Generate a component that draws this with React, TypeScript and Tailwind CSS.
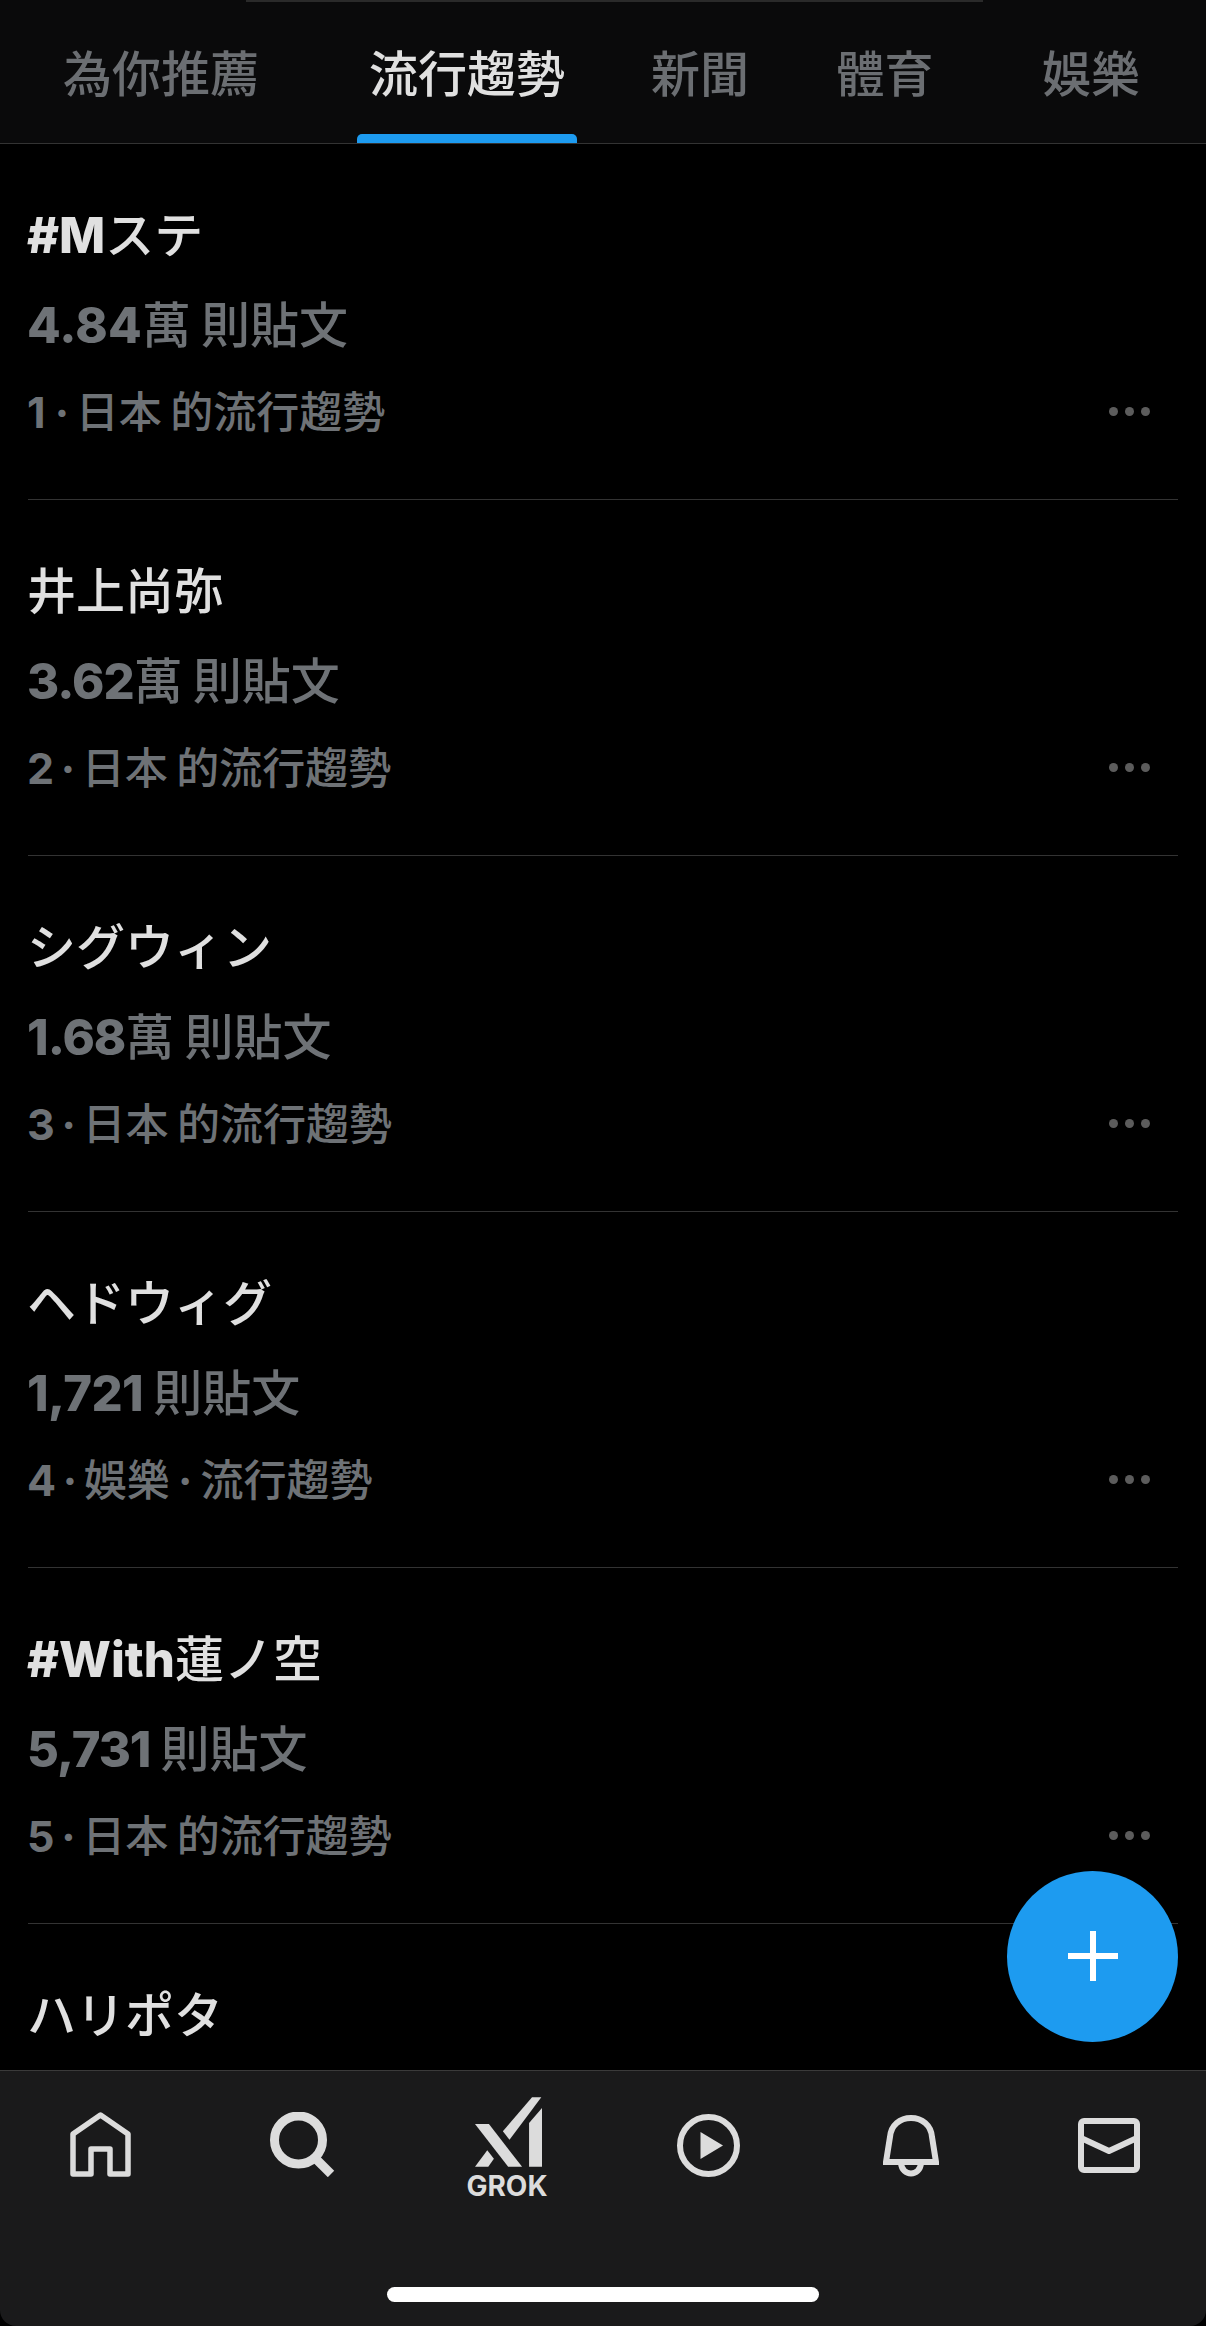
const CJK = "font-['Inter','Noto_Sans_CJK_JP','Noto_Sans_CJK_TC',sans-serif]";

const tabs = [
  { label: "為你推薦", w: "w-[322px]", active: false },
  { label: "流行趨勢", w: "w-[290px]", active: true },
  { label: "新聞", w: "w-[176px]", active: false },
  { label: "體育", w: "w-[193px]", active: false },
  { label: "娛樂", w: "w-[220px]", active: false },
];

const rows = [
  { title: <><b className="font-extrabold">#M</b>ステ</>, num: "4.84", numCls: "tracking-[0.2px]", unit: "萬", rank: "1", meta: "日本 的流行趨勢" },
  { title: <>井上尚弥</>, num: "3.62", numCls: "tracking-[-1px]", unit: "萬", rank: "2", meta: "日本 的流行趨勢" },
  { title: <>シグウィン</>, num: "1.68", numCls: "tracking-[-1px]", unit: "萬", rank: "3", meta: "日本 的流行趨勢" },
  { title: <>ヘドウィグ</>, num: "1,721", numCls: "tracking-[-0.6px]", unit: "", rank: "4", meta: <>娛樂<b className="mx-[1px] font-bold"> · </b>流行趨勢</> },
  { title: <><b className="font-extrabold">#With</b>蓮ノ空</>, num: "5,731", numCls: "tracking-[-1px]", unit: "", rank: "5", meta: "日本 的流行趨勢" },
  { title: <>ハリポタ</>, num: "", numCls: "", unit: "", rank: "", meta: "" },
];

function Row({ r }: { r: (typeof rows)[number] }) {
  return (
    <div className="mx-[28px] h-[356px] shrink-0 border-b border-[#333333] pt-[62px]">
      <div className="-ml-px h-[60px] text-[49px] font-medium leading-[60px] text-[#e0e0e0]">{r.title}</div>
      {r.rank && (
        <>
          <div className="-ml-px mt-[30px] h-[60px] whitespace-pre text-[49px] font-medium leading-[60px] text-[#6e7276] [word-spacing:-3px]">
            <b className={`font-extrabold ${r.numCls}`}>{r.num}</b>
            {r.unit} 則貼文
          </div>
          <div className="mt-[26px] flex h-[60px] items-center justify-between whitespace-pre text-[43px] font-medium leading-[60px] text-[#6e7276]">
            <span className="-ml-px [word-spacing:-3px]">
              <b className="inline-block min-w-[21px] font-bold">{r.rank}</b>
              <b className="mx-[-0.5px] font-bold"> · </b>
              {r.meta}
            </span>
            <span className="mb-[2px] mr-[28px] flex gap-[7px]">
              <span className="h-[9px] w-[9px] rounded-full bg-[#5c5c5c]" />
              <span className="h-[9px] w-[9px] rounded-full bg-[#5c5c5c]" />
              <span className="h-[9px] w-[9px] rounded-full bg-[#5c5c5c]" />
            </span>
          </div>
        </>
      )}
    </div>
  );
}

const IC = "#dcdcdc";

export default function App() {
  return (
    <div className={`relative flex h-[2326px] w-[1206px] flex-col overflow-hidden bg-black ${CJK}`}>
      <header className="h-[144px] shrink-0 border-b border-[#333333] bg-[#0a0a0b]">
        <div className="ml-[246px] h-[2px] w-[737px] bg-[#2a2a2a]" />
        <div className="flex h-[141px]">
          {tabs.map((t) => (
            <div key={t.label} className={`flex h-full flex-col items-center ${t.w}`}>
              <div
                className={`mt-[43px] h-[60px] text-[49px] font-medium leading-[60px] ${
                  t.active ? "text-[#e0e0e0]" : "text-[#6b6e72]"
                }`}
              >
                {t.label}
              </div>
              {t.active && <div className="mt-auto h-[9px] w-[220px] rounded-t-[5px] bg-[#1d9bf0]" />}
            </div>
          ))}
        </div>
      </header>

      <main className="flex min-h-0 flex-1 flex-col overflow-hidden">
        {rows.map((r, i) => (
          <Row key={i} r={r} />
        ))}
      </main>

      <button className="absolute left-[1007px] top-[1871px] flex h-[171px] w-[171px] items-center justify-center rounded-full bg-[#1d9bf0]">
        <svg className="mb-[1px]" width="50" height="50" viewBox="0 0 50 50">
          <path d="M25 0V50M0 25H50" stroke="#ffffff" strokeWidth="6" fill="none" />
        </svg>
      </button>

      <nav className="flex h-[256px] shrink-0 flex-col rounded-b-[16px] border-t border-[#3a3a3a] bg-[#1a1a1b]">
        <div className="flex items-start pl-[70px]">
          <svg className="mt-[41px]" width="61" height="65" viewBox="0 0 61 65" fill="none" stroke={IC} strokeWidth="5.5" strokeLinejoin="round">
            <path d="M3 62V22L30.5 3L58 22V62H40V37H21V62Z" />
          </svg>
          <svg className="ml-[139px] mt-[41px]" width="65" height="65" viewBox="0 0 65 65" fill="none" stroke={IC} strokeWidth="9">
            <circle cx="28.5" cy="28" r="24" />
            <path d="M45 46L61 62" />
          </svg>
          <div className="ml-[132px] mt-[26px] flex w-[80px] flex-col items-center">
            <svg className="ml-[2px]" width="67" height="70" viewBox="128 52 202 210" fill={IC}>
              <path d="M300 52H328L232 180L212 155Z" />
              <path d="M128 133H170L270 262H228Z" />
              <path d="M128 262L165 212L185 238L168 262Z" />
              <path d="M291 262V130L330 85V262Z" />
            </svg>
            <div className="mt-[6px] text-[28px] font-bold leading-[26px] text-[#dcdcdc]">GROK</div>
          </div>
          <svg className="ml-[130px] mt-[43px]" width="63" height="63" viewBox="0 0 63 63" fill="none" stroke={IC} strokeWidth="6">
            <circle cx="31.5" cy="31.5" r="28.5" />
            <path d="M23.5 18L46 31.5L23.5 45Z" fill={IC} stroke="none" />
          </svg>
          <svg className="ml-[143px] mt-[44px]" width="56" height="62" viewBox="0 0 56 62" fill="none" stroke={IC} strokeWidth="6">
            <path d="M3 47L7 22C8 10 17 3 28 3C39 3 48 10 49 22L53 47Z" />
            <path d="M18 48C19 62 37 62 38 48" />
          </svg>
          <svg className="ml-[139px] mt-[47px]" width="62" height="55" viewBox="0 0 62 55" fill="none" stroke={IC} strokeWidth="6" strokeLinejoin="round">
            <rect x="3" y="3" width="56" height="49" rx="3" />
            <path d="M3 20L31 33L59 20" />
          </svg>
        </div>
        <div className="mb-[24px] mt-auto h-[15px] w-[432px] self-center rounded-full bg-white" />
      </nav>
    </div>
  );
}
